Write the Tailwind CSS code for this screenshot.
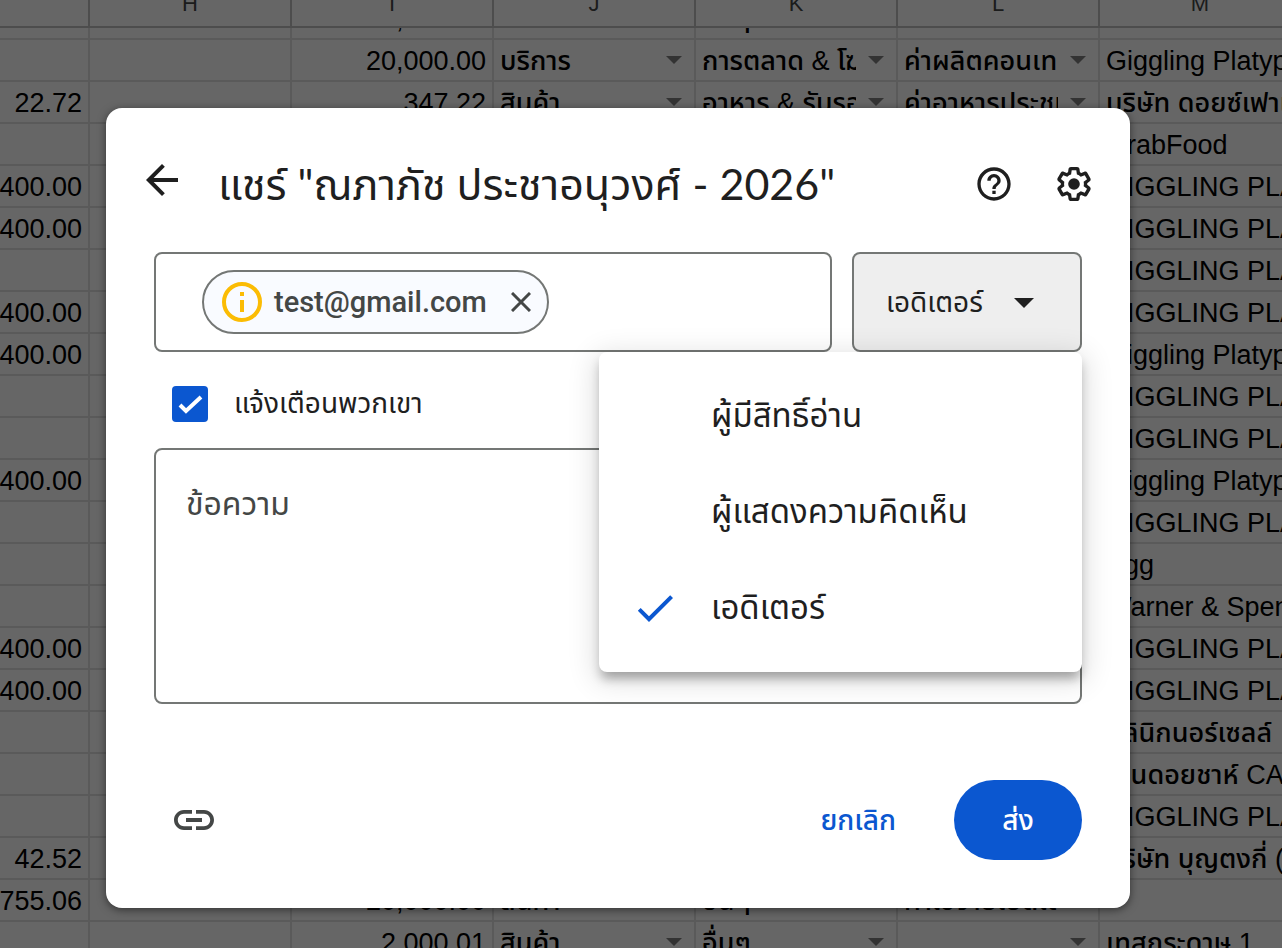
<!DOCTYPE html>
<html lang="th">
<head>
  <meta charset="UTF-8" />
  <meta name="viewport" content="width=device-width, initial-scale=1.0" />
  <title>แชร์</title>
  <script src="https://cdn.jsdelivr.net/npm/@tailwindcss/browser@4"></script>
</head>
<body class="relative h-screen overflow-hidden bg-white font-['Roboto','Noto_Sans_Thai',sans-serif] text-[#1f1f1f]">

  <!-- Sheet -->
  <table class="w-[calc(100%+20px)] table-fixed border-separate border-spacing-0 font-['Liberation_Sans','Noto_Sans_Thai',sans-serif] text-[27px] leading-[38px] text-black">
    <colgroup>
      <col class="w-[90px]" />
      <col class="w-[202px]" />
      <col class="w-[202px]" />
      <col class="w-[202px]" />
      <col class="w-[202px]" />
      <col class="w-[202px]" />
      <col />
    </colgroup>
    <thead class="text-[22px] leading-[24px] text-[#444746]">
      <tr id="letters"></tr>
    </thead>
    <tbody id="rows" class="font-medium"></tbody>
  </table>

  <!-- Share dialog -->
  <div class="absolute inset-0 bg-black/60 pt-[108px] pr-[152px] pl-[106px]">
    <div role="dialog" aria-labelledby="dialog-title" class="flex w-full max-w-[1024px] flex-col rounded-2xl bg-white px-12 pt-12 pb-12 shadow-[0_2px_8px_rgba(0,0,0,0.5)]">
      <header class="-mx-4 flex h-14 items-center">
        <button type="button" aria-label="กลับ" class="mb-2 shrink-0">
          <svg class="size-12" viewBox="0 0 24 24" fill="#1f1f1f"><path d="M20 11H7.83l5.59-5.59L12 4l-8 8 8 8 1.41-1.41L7.83 13H20v-2z" /></svg>
        </button>
        <h1 id="dialog-title" class="ml-8 grow whitespace-nowrap font-['Lato','Noto_Sans_Thai',sans-serif] text-[43px] leading-[56px]">แชร์ "ณภาภัช ประชาอนุวงศ์ - 2026"</h1>
        <div class="flex shrink-0 gap-10 pr-1">
          <button type="button" aria-label="ความช่วยเหลือ">
            <svg class="size-10" viewBox="0 0 24 24" fill="#1f1f1f"><path d="M11 18h2v-2h-2v2zm1-16C6.48 2 2 6.48 2 12s4.48 10 10 10 10-4.48 10-10S17.52 2 12 2zm0 18c-4.41 0-8-3.59-8-8s3.59-8 8-8 8 3.59 8 8-3.59 8-8 8zm0-14c-2.21 0-4 1.79-4 4h2c0-1.1.9-2 2-2s2 .9 2 2c0 2-3 1.75-3 5h2c0-2.25 3-2.5 3-5 0-2.21-1.79-4-4-4z" /></svg>
          </button>
          <button type="button" aria-label="การตั้งค่า">
            <svg class="size-10" viewBox="0 0 24 24" fill="#1f1f1f"><path d="M13.85 22.25h-3.7c-.74 0-1.36-.54-1.45-1.27l-.27-1.89c-.27-.14-.53-.29-.79-.46l-1.8.72c-.7.26-1.47-.03-1.81-.65L2.2 15.53c-.35-.66-.2-1.44.36-1.88l1.53-1.19c-.01-.15-.02-.3-.02-.46 0-.15.01-.31.02-.46l-1.52-1.19c-.59-.45-.74-1.26-.37-1.88l1.85-3.19c.34-.62 1.11-.9 1.79-.63l1.81.73c.26-.17.52-.32.78-.46l.27-1.91c.09-.7.71-1.25 1.44-1.25h3.7c.74 0 1.36.54 1.45 1.27l.27 1.89c.27.14.53.29.79.46l1.8-.72c.71-.26 1.48.03 1.82.65l1.84 3.18c.36.66.2 1.44-.36 1.88l-1.52 1.19c.01.15.02.3.02.46s-.01.31-.02.46l1.52 1.19c.56.45.72 1.23.37 1.86l-1.86 3.22c-.34.62-1.11.9-1.8.63l-1.8-.72c-.26.17-.52.32-.78.46l-.27 1.91c-.1.68-.72 1.22-1.46 1.22zm-3.23-2h2.76l.37-2.55.53-.22c.44-.18.88-.44 1.34-.78l.45-.34 2.38.96 1.38-2.4-2.03-1.58.07-.56c.03-.26.06-.51.06-.78s-.03-.53-.06-.78l-.07-.56 2.03-1.58-1.39-2.4-2.39.96-.45-.35c-.42-.32-.87-.58-1.33-.77l-.52-.22-.37-2.55h-2.76l-.37 2.55-.53.21c-.44.19-.88.44-1.34.79l-.45.33-2.38-.95-1.39 2.39 2.03 1.58-.07.56a7 7 0 0 0-.06.79c0 .26.02.53.06.78l.07.56-2.03 1.58 1.38 2.4 2.39-.96.45.35c.43.33.86.58 1.33.77l.53.22.38 2.55z" /><circle cx="12" cy="12" r="3.5" /></svg>
          </button>
        </div>
      </header>

      <div class="relative mt-10 flex gap-5">
        <div class="flex h-[100px] min-w-0 grow items-center rounded-lg border-2 border-[#747775] pr-4 pl-[46px]">
          <div class="flex h-16 shrink-0 items-center rounded-full border-2 border-[#747775] bg-[#f9fbff] pr-4 pl-[18px]">
            <svg class="size-10" viewBox="0 0 40 40"><circle cx="20" cy="20" r="18" fill="none" stroke="#fbbc04" stroke-width="4" /><path d="M18 10h4v4h-4zM18 18h4v12h-4z" fill="#fbbc04" /></svg>
            <span class="ml-3 text-[29px] leading-10 font-medium text-[#444746]">test@gmail.com</span>
            <button type="button" aria-label="นำออก" class="ml-6">
              <svg class="size-5" viewBox="0 0 20 20" stroke="#444746" stroke-width="3"><path d="M1 1l18 18M19 1L1 19" /></svg>
            </button>
          </div>
          <input type="email" aria-label="เพิ่มผู้คน" class="h-16 w-full min-w-0 pl-4 text-[28px] outline-none" />
        </div>

        <div class="relative w-[230px] shrink-0">
          <select aria-label="บทบาท" class="h-[100px] w-full appearance-none rounded-lg border-2 border-[#747775] bg-[#eee] pt-[2px] pl-8 text-[28px] leading-10">
            <option>ผู้มีสิทธิ์อ่าน</option>
            <option>ผู้แสดงความคิดเห็น</option>
            <option selected>เอดิเตอร์</option>
          </select>
          <svg class="pointer-events-none absolute top-[46px] right-12 h-[10px] w-5" viewBox="0 0 20 10" fill="#1f1f1f"><path d="M0 0h20L10 10z" /></svg>
        </div>

        <ul role="listbox" aria-label="บทบาท" class="absolute top-full right-0 z-10 w-[483px] rounded-lg bg-white py-4 text-[33px] leading-[96px] shadow-[0_8px_10px_1px_rgba(0,0,0,0.14),0_6px_28px_5px_rgba(0,0,0,0.12),0_10px_10px_-6px_rgba(0,0,0,0.2)]">
          <li role="option" class="h-24 pl-28">ผู้มีสิทธิ์อ่าน</li>
          <li role="option" class="h-24 pl-28">ผู้แสดงความคิดเห็น</li>
          <li role="option" aria-selected="true" class="flex h-24 items-center pl-8">
            <svg class="mr-8 size-12" viewBox="0 0 24 24" fill="#0b57d0"><path d="M9 16.17L4.83 12l-1.42 1.41L9 19 21 7l-1.41-1.41z" /></svg>
            เอดิเตอร์
          </li>
        </ul>
      </div>

      <div class="flex h-24 items-center pt-2 pl-[18px]">
        <div class="relative size-9">
          <input id="notify" type="checkbox" checked class="block size-9 appearance-none rounded bg-[#0b57d0]" />
          <svg class="pointer-events-none absolute inset-0 size-9" viewBox="0 0 36 36" fill="none" stroke="#fff" stroke-width="4"><path d="M8 19l6 6L29 11" /></svg>
        </div>
        <label for="notify" class="ml-[26px] text-[28px] leading-10">แจ้งเตือนพวกเขา</label>
      </div>

      <textarea aria-label="ข้อความ" placeholder="ข้อความ" class="block h-64 w-full resize-none rounded-lg border-2 border-[#747775] p-[30px] text-[32px] leading-[48px] placeholder:text-[#444746]"></textarea>

      <footer class="mt-[76px] flex h-20 items-center">
        <button type="button" aria-label="คัดลอกลิงก์" class="ml-4">
          <svg class="size-12" viewBox="0 0 24 24" fill="#444746"><path d="M3.9 12c0-1.71 1.39-3.1 3.1-3.1h4V7H7c-2.76 0-5 2.24-5 5s2.24 5 5 5h4v-1.9H7c-1.71 0-3.1-1.39-3.1-3.1zM8 13h8v-2H8v2zm9-6h-4v1.9h4c1.71 0 3.1 1.39 3.1 3.1s-1.39 3.1-3.1 3.1h-4V17h4c2.76 0 5-2.24 5-5s-2.24-5-5-5z" /></svg>
        </button>
        <button type="button" class="ml-auto h-20 px-6 pt-[2px] text-[28px] font-medium text-[#0b57d0]">ยกเลิก</button>
        <button type="button" class="ml-[34px] h-20 w-32 rounded-full bg-[#0b57d0] pt-[2px] text-[28px] font-medium text-white">ส่ง</button>
      </footer>
    </div>
  </div>

  <script>
    const letters = ["", "H", "I", "J", "K", "L", "M"];

    // G, I, J, K, L, M (column H is empty)
    const rows = [
      ["1,000.00", "2,000.00", "สินค้า", "อื่นๆ", "ค่าอาหาร", "บริษัท"],
      ["", "20,000.00", "บริการ", "การตลาด & โฆษณา", "ค่าผลิตคอนเทนต์", "Giggling Platypus"],
      ["22.72", "347.22", "สินค้า", "อาหาร & รับรอง", "ค่าอาหารประชุม", "บริษัท ดอยซ์เฟาเดอร์"],
      ["", "", "", "", "", "GrabFood"],
      ["400.00", "", "", "", "", "GIGGLING PLATYPUS"],
      ["400.00", "", "", "", "", "GIGGLING PLATYPUS"],
      ["", "", "", "", "", "GIGGLING PLATYPUS"],
      ["400.00", "", "", "", "", "GIGGLING PLATYPUS"],
      ["400.00", "", "", "", "", "Giggling Platypus"],
      ["", "", "", "", "", "GIGGLING PLATYPUS"],
      ["", "", "", "", "", "GIGGLING PLATYPUS"],
      ["400.00", "", "", "", "", "Giggling Platypus"],
      ["", "", "", "", "", "GIGGLING PLATYPUS"],
      ["", "", "", "", "", "Egg"],
      ["", "", "", "", "", "Warner & Spencer"],
      ["400.00", "", "", "", "", "GIGGLING PLATYPUS"],
      ["400.00", "", "", "", "", "GIGGLING PLATYPUS"],
      ["", "", "", "", "", "คลินิกนอร์เซลล์"],
      ["", "", "", "", "", "ร้านดอยชาห์ CAFE"],
      ["", "", "", "", "", "GIGGLING PLATYPUS"],
      ["42.52", "", "", "", "", "บริษัท บุญตงกี่ (ประเทศไทย)"],
      ["755.06", "20,000.00", "สินค้า", "อื่นๆ", "ค่าใช้จ่ายเบ็ดเตล็ด", ""],
      ["", "2,000.01", "สินค้า", "อื่นๆ", " ", "เทสกระดาษ 1"],
    ];

    const td = (inner) => `<td class="overflow-hidden border-r-2 border-b-2 border-[#e1e1e1] p-0">${inner}</td>`;
    const height = (i) => (i === 0 ? "h-[10px]" : "h-10");
    const number = (v, i) => td(`<div class="${height(i)} flex items-end justify-end overflow-hidden px-[6px] whitespace-nowrap">${v}</div>`);
    const text = (v, i) => td(`<div class="${height(i)} flex items-end overflow-hidden pl-[6px] whitespace-nowrap">${v}</div>`);
    const choice = (v, i) => td(`<div class="${height(i)} flex items-end overflow-hidden pr-3 pl-[6px] whitespace-nowrap">
      <span class="mr-3 grow overflow-hidden">${v}</span>
      ${v && i ? '<svg class="mb-4 h-2 w-4 shrink-0" viewBox="0 0 16 8" fill="#808080"><path d="M0 0h16L8 8z" /></svg>' : ""}
    </div>`);

    document.getElementById("letters").innerHTML = letters
      .map((l) => `<th class="border-r-2 border-b-2 border-[#c0c0c0] p-0 font-normal"><div class="flex h-[26px] items-end justify-center overflow-hidden pb-[10px]">${l}</div></th>`)
      .join("");
    document.getElementById("rows").innerHTML = rows
      .map(([g, i, j, k, l, m], n) => `<tr>${number(g, n)}${text("", n)}${number(i, n)}${choice(j, n)}${choice(k, n)}${choice(l, n)}${text(m, n)}</tr>`)
      .join("");
  </script>
</body>
</html>
